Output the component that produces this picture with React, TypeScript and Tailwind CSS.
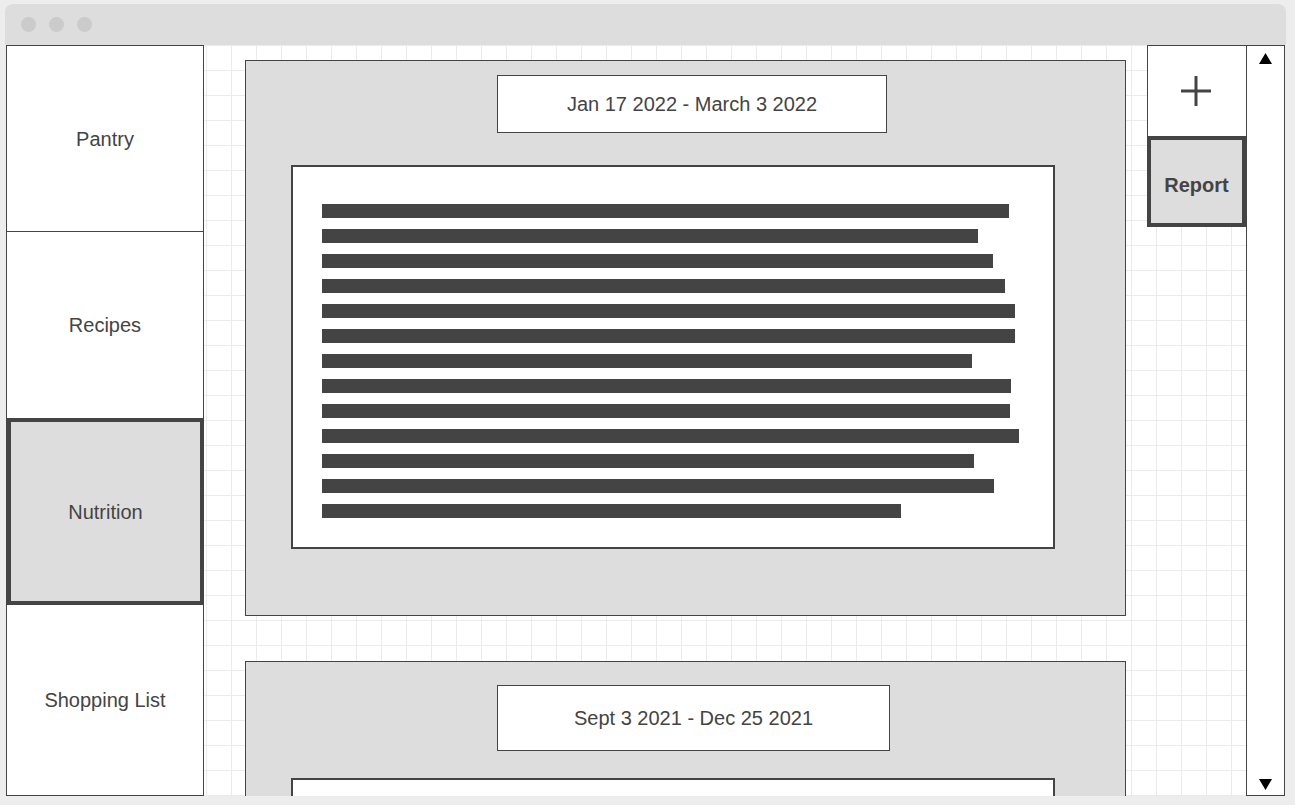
import React from "react";

const bars = [687, 656, 671, 683, 693, 693, 650, 689, 688, 697, 652, 672, 579];

const App = () => {
  return (
    <div className="w-[1295px] h-[805px] bg-[#ededed] pt-[4px] pl-[5px] overflow-hidden font-['Liberation_Sans',Arial,sans-serif] text-[#444]">
      <div className="w-[1281px] flex flex-col">
        {/* title bar */}
        <div className="h-[41px] bg-[#dddddd] rounded-t-[8px] flex items-center gap-[13px] pl-[16px]">
          <span className="w-[15px] h-[15px] rounded-full bg-[#cbcbcb]" />
          <span className="w-[15px] h-[15px] rounded-full bg-[#cbcbcb]" />
          <span className="w-[15px] h-[15px] rounded-full bg-[#cbcbcb]" />
        </div>

        <div className="flex h-[751px] ml-[1px]">
          {/* sidebar */}
          <div className="w-[198px] shrink-0 border border-[#444] bg-white flex flex-col text-[20px]">
            <div className="h-[186px] shrink-0 border-b border-[#444] flex items-center justify-center">Pantry</div>
            <div className="h-[186px] shrink-0 flex items-center justify-center">Recipes</div>
            <div className="h-[187px] shrink-0 -mr-px bg-[#dddddd] border-[4px] border-[#444] flex items-center justify-center">
              Nutrition
            </div>
            <div className="flex-1 flex items-center justify-center">Shopping List</div>
          </div>

          {/* main canvas */}
          <div className="w-[1042px] h-full overflow-hidden bg-white bg-[linear-gradient(to_right,#ebebeb_1px,transparent_1px),linear-gradient(to_bottom,#ebebeb_1px,transparent_1px)] bg-[size:25px_25px] bg-[position:2px_0px] flex">
            <div className="pl-[41px] pt-[15px] flex flex-col gap-[45px]">
              {/* card 1 */}
              <div className="w-[881px] h-[556px] bg-[#dddddd] border border-[#444] flex flex-col items-start shrink-0">
                <div className="shrink-0 ml-[251px] mt-[14px] w-[390px] h-[58px] bg-white border border-[#444] flex items-center justify-center text-[20px]">
                  Jan 17 2022 - March 3 2022
                </div>
                <div className="shrink-0 ml-[45px] mt-[32px] w-[764px] h-[384px] bg-white border-2 border-[#444] pl-[29px] pt-[37px] flex flex-col gap-[11px]">
                  {bars.map((w, i) => (
                    <div key={i} className="h-[14px] bg-[#444]" style={{ width: w }} />
                  ))}
                </div>
              </div>

              {/* card 2 */}
              <div className="w-[881px] h-[300px] bg-[#dddddd] border border-[#444] flex flex-col items-start shrink-0">
                <div className="shrink-0 ml-[251px] mt-[23px] w-[393px] h-[66px] bg-white border border-[#444] flex items-center justify-center text-[20px]">
                  Sept 3 2021 - Dec 25 2021
                </div>
                <div className="shrink-0 ml-[45px] mt-[27px] w-[764px] h-[300px] bg-white border-2 border-[#444]" />
              </div>
            </div>

            {/* tools */}
            <div className="ml-[21px] w-[99px] flex flex-col shrink-0">
              <div className="h-[91px] bg-white border border-r-0 border-b-0 border-[#444] flex items-center justify-center pr-[2px]">
                <svg width="30" height="30" viewBox="0 0 30 30">
                  <line x1="15" y1="0" x2="15" y2="30" stroke="#444" strokeWidth="3" />
                  <line x1="0" y1="15" x2="30" y2="15" stroke="#444" strokeWidth="3" />
                </svg>
              </div>
              <div className="h-[91px] bg-[#dddddd] border-[4px] border-[#444] flex items-center justify-center pt-[6px] text-[20px] font-bold">
                Report
              </div>
            </div>
          </div>

          {/* scrollbar */}
          <div className="w-[39px] h-full bg-white border border-[#444] flex flex-col items-center justify-between pt-[7px] pb-[5px]">
            <svg width="13" height="11" viewBox="0 0 13 11">
              <polygon points="6.5,0 13,11 0,11" fill="#000" />
            </svg>
            <svg width="13" height="11" viewBox="0 0 13 11">
              <polygon points="0,0 13,0 6.5,11" fill="#000" />
            </svg>
          </div>
        </div>
      </div>
    </div>
  );
};

export default App;
